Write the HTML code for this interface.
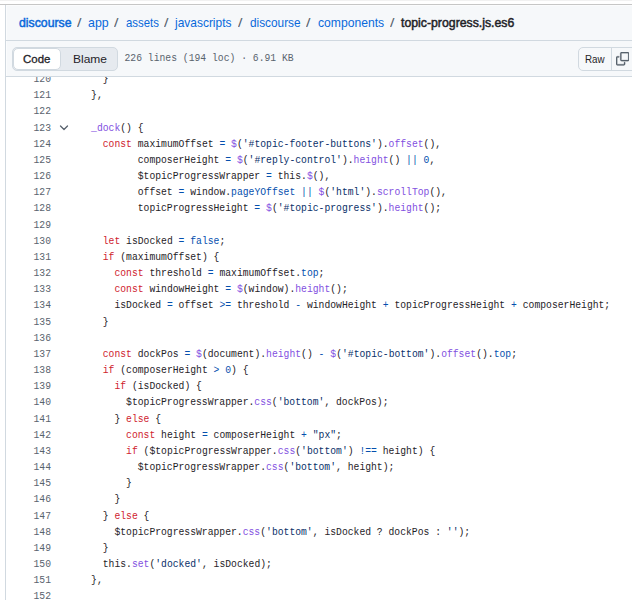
<!DOCTYPE html>
<html><head><meta charset="utf-8">
<style>
*{box-sizing:border-box;margin:0;padding:0}
html,body{width:632px;height:600px;overflow:hidden;background:#fff;font-family:"Liberation Sans",sans-serif}
.abs{position:absolute}
#topline{position:absolute;left:0;top:0;width:632px;height:1px;background:#f1f1f1}
#hline{position:absolute;left:0;top:4px;width:632px;height:1px;background:#c6c6c6}
#vline{position:absolute;left:5px;top:5px;width:1px;height:595px;background:#d1d9e0}
#hdr{position:absolute;left:6px;top:5px;width:626px;height:36px;background:#f6f8fa;border-bottom:1px solid #d1d9e0}
.cr{position:absolute;top:10.15px;font-size:12.8px;line-height:16px;white-space:nowrap;transform-origin:0 0}
#tb{position:absolute;left:6px;top:41px;width:626px;height:36px;background:#f6f8fa;border-bottom:1px solid #d1d9e0}
#seg{position:absolute;left:6px;top:6px;width:106px;height:23.5px;border-radius:5px;background:#e6eaef;border:1px solid #d1d9e0}
#seg .code{position:absolute;left:-0.5px;top:-0.5px;width:48px;height:22.5px;background:#fff;border:1px solid #d1d9e0;border-radius:5px}
.bt{position:absolute;font-size:11.4px;line-height:14px;white-space:nowrap;color:#1f2328;transform-origin:0 0}
#meta{position:absolute;left:118.5px;top:9.9px;font-family:"Liberation Mono",monospace;font-size:9.72px;line-height:16px;color:#59636e;white-space:pre;transform:scaleY(1.17)}
#raw{position:absolute;left:572px;top:6px;width:70px;height:23.5px;border:1px solid #d1d9e0;border-radius:5px;background:#f6f8fa}
#raw .d{position:absolute;left:32px;top:0;width:1px;height:21.5px;background:#d1d9e0}
#raw svg{position:absolute;left:36.6px;top:4.3px}
#code{position:absolute;left:6px;top:77px;width:626px;height:523px;overflow:hidden;background:#fff}
#lines{position:absolute;left:0;top:0;width:626px;height:600px}
.r{position:absolute;left:0;height:16.167px;width:626px;font-family:"Liberation Mono",monospace;font-size:9.72px;line-height:16.167px;white-space:pre;transform:scaleY(1.17);transform-origin:50% 50%}
.ln{position:absolute;right:581.0px;top:0;color:#59636e;transform-origin:100% 50%}
.cl{position:absolute;left:73.4px;top:0;color:#1f2328}
.k{color:#cf222e}.f{color:#8250df}.c{color:#0550ae}.s{color:#0a3069}
#chev{position:absolute;left:52.5px;top:46.5px}
</style></head><body>
<div id="topline"></div>
<div id="hline"></div>
<div style="position:absolute;left:6px;top:5px;width:626px;height:1px;background:#fbfcfd;z-index:2"></div>
<div id="hdr"><span class="cr" style="left:-6px;margin-left:18.95px;font-weight:normal;-webkit-text-stroke:0.5px currentColor;color:#0969da;transform:scaleX(0.9590)">discourse</span><span class="cr" style="left:-6px;margin-left:77.10px;font-weight:normal;color:#59636e;transform:scaleX(1.2500)">/</span><span class="cr" style="left:-6px;margin-left:88.30px;font-weight:normal;color:#0969da;transform:scaleX(0.9680)">app</span><span class="cr" style="left:-6px;margin-left:114.30px;font-weight:normal;color:#59636e;transform:scaleX(1.2500)">/</span><span class="cr" style="left:-6px;margin-left:126.30px;font-weight:normal;color:#0969da;transform:scaleX(0.8890)">assets</span><span class="cr" style="left:-6px;margin-left:164.10px;font-weight:normal;color:#59636e;transform:scaleX(1.2500)">/</span><span class="cr" style="left:-6px;margin-left:175.40px;font-weight:normal;color:#0969da;transform:scaleX(0.9340)">javascripts</span><span class="cr" style="left:-6px;margin-left:238.10px;font-weight:normal;color:#59636e;transform:scaleX(1.2500)">/</span><span class="cr" style="left:-6px;margin-left:249.80px;font-weight:normal;color:#0969da;transform:scaleX(0.9230)">discourse</span><span class="cr" style="left:-6px;margin-left:306.30px;font-weight:normal;color:#59636e;transform:scaleX(1.2500)">/</span><span class="cr" style="left:-6px;margin-left:318.20px;font-weight:normal;color:#0969da;transform:scaleX(0.9480)">components</span><span class="cr" style="left:-6px;margin-left:390.20px;font-weight:normal;color:#59636e;transform:scaleX(1.2500)">/</span><span class="cr" style="left:-6px;margin-left:401.25px;font-weight:normal;-webkit-text-stroke:0.5px currentColor;color:#1f2328;transform:scaleX(0.9600)">topic-progress.js.es6</span></div>
<div id="tb">
 <div id="seg"><div class="code"></div></div>
 <span class="bt" style="left:16.95px;top:11.0px;font-weight:normal;-webkit-text-stroke:0.3px currentColor;transform:scaleX(1.006)">Code</span>
 <span class="bt" style="left:66.9px;top:11.0px;transform:scaleX(1.054)">Blame</span>
 <div id="meta">226 lines (194 loc) · 6.91 KB</div>
 <div id="raw"><div class="d"></div>
  <svg width="13.4" height="13.4" viewBox="0 0 16 16" fill="#59636e" stroke="#59636e" stroke-width="0.25"><path d="M0 6.75C0 5.784.784 5 1.75 5h1.5a.75.75 0 0 1 0 1.5h-1.5a.25.25 0 0 0-.25.25v7.5c0 .138.112.25.25.25h7.5a.25.25 0 0 0 .25-.25v-1.5a.75.75 0 0 1 1.5 0v1.5A1.75 1.75 0 0 1 9.25 16h-7.5A1.75 1.75 0 0 1 0 14.25Z"/><path d="M5 1.75C5 .784 5.784 0 6.75 0h7.5C15.216 0 16 .784 16 1.75v7.5A1.75 1.75 0 0 1 14.25 11h-7.5A1.75 1.75 0 0 1 5 9.25Zm1.75-.25a.25.25 0 0 0-.25.25v7.5c0 .138.112.25.25.25h7.5a.25.25 0 0 0 .25-.25v-7.5a.25.25 0 0 0-.25-.25Z"/></svg>
 </div>
 <span class="bt" style="left:578.7px;top:11.0px;transform:scaleX(0.86)">Raw</span>
</div>
<div id="vline"></div>
<div style="position:absolute;left:6px;top:5px;width:1px;height:35px;background:#fbfcfd;z-index:2"></div><div style="position:absolute;left:6px;top:41px;width:1px;height:35px;background:#fbfcfd;z-index:2"></div>
<div id="code"><div id="lines">
<div class="r" style="top:-4.950px"><span class="ln">120</span><span class="cl">    }</span></div>
<div class="r" style="top:11.217px"><span class="ln">121</span><span class="cl">  },</span></div>
<div class="r" style="top:27.384px"><span class="ln">122</span><span class="cl"></span></div>
<div class="r" style="top:43.551px"><span class="ln">123</span><span class="cl">  <span class="f">_dock</span>() {</span></div>
<div class="r" style="top:59.718px"><span class="ln">124</span><span class="cl">    <span class="k">const</span> maximumOffset <span class="c">=</span> <span class="f">$</span>(<span class="s">&#x27;#topic-footer-buttons&#x27;</span>).<span class="f">offset</span>(),</span></div>
<div class="r" style="top:75.885px"><span class="ln">125</span><span class="cl">          composerHeight <span class="c">=</span> <span class="f">$</span>(<span class="s">&#x27;#reply-control&#x27;</span>).<span class="f">height</span>() <span class="c">||</span> <span class="c">0</span>,</span></div>
<div class="r" style="top:92.052px"><span class="ln">126</span><span class="cl">          $topicProgressWrapper <span class="c">=</span> this.<span class="f">$</span>(),</span></div>
<div class="r" style="top:108.219px"><span class="ln">127</span><span class="cl">          offset <span class="c">=</span> window.<span class="c">pageYOffset</span> <span class="c">||</span> <span class="f">$</span>(<span class="s">&#x27;html&#x27;</span>).<span class="f">scrollTop</span>(),</span></div>
<div class="r" style="top:124.386px"><span class="ln">128</span><span class="cl">          topicProgressHeight <span class="c">=</span> <span class="f">$</span>(<span class="s">&#x27;#topic-progress&#x27;</span>).<span class="f">height</span>();</span></div>
<div class="r" style="top:140.553px"><span class="ln">129</span><span class="cl"></span></div>
<div class="r" style="top:156.720px"><span class="ln">130</span><span class="cl">    <span class="k">let</span> isDocked <span class="c">=</span> <span class="c">false</span>;</span></div>
<div class="r" style="top:172.887px"><span class="ln">131</span><span class="cl">    <span class="k">if</span> (maximumOffset) {</span></div>
<div class="r" style="top:189.054px"><span class="ln">132</span><span class="cl">      <span class="k">const</span> threshold <span class="c">=</span> maximumOffset.<span class="c">top</span>;</span></div>
<div class="r" style="top:205.221px"><span class="ln">133</span><span class="cl">      <span class="k">const</span> windowHeight <span class="c">=</span> <span class="f">$</span>(window).<span class="f">height</span>();</span></div>
<div class="r" style="top:221.388px"><span class="ln">134</span><span class="cl">      isDocked <span class="c">=</span> offset <span class="c">&gt;=</span> threshold <span class="c">-</span> windowHeight <span class="c">+</span> topicProgressHeight <span class="c">+</span> composerHeight;</span></div>
<div class="r" style="top:237.555px"><span class="ln">135</span><span class="cl">    }</span></div>
<div class="r" style="top:253.722px"><span class="ln">136</span><span class="cl"></span></div>
<div class="r" style="top:269.889px"><span class="ln">137</span><span class="cl">    <span class="k">const</span> dockPos <span class="c">=</span> <span class="f">$</span>(document).<span class="f">height</span>() <span class="c">-</span> <span class="f">$</span>(<span class="s">&#x27;#topic-bottom&#x27;</span>).<span class="f">offset</span>().<span class="c">top</span>;</span></div>
<div class="r" style="top:286.056px"><span class="ln">138</span><span class="cl">    <span class="k">if</span> (composerHeight <span class="c">&gt;</span> <span class="c">0</span>) {</span></div>
<div class="r" style="top:302.223px"><span class="ln">139</span><span class="cl">      <span class="k">if</span> (isDocked) {</span></div>
<div class="r" style="top:318.390px"><span class="ln">140</span><span class="cl">        $topicProgressWrapper.<span class="f">css</span>(<span class="s">&#x27;bottom&#x27;</span>, dockPos);</span></div>
<div class="r" style="top:334.557px"><span class="ln">141</span><span class="cl">      } <span class="k">else</span> {</span></div>
<div class="r" style="top:350.724px"><span class="ln">142</span><span class="cl">        <span class="k">const</span> height <span class="c">=</span> composerHeight <span class="c">+</span> <span class="s">&quot;px&quot;</span>;</span></div>
<div class="r" style="top:366.891px"><span class="ln">143</span><span class="cl">        <span class="k">if</span> ($topicProgressWrapper.<span class="f">css</span>(<span class="s">&#x27;bottom&#x27;</span>) <span class="c">!==</span> height) {</span></div>
<div class="r" style="top:383.058px"><span class="ln">144</span><span class="cl">          $topicProgressWrapper.<span class="f">css</span>(<span class="s">&#x27;bottom&#x27;</span>, height);</span></div>
<div class="r" style="top:399.225px"><span class="ln">145</span><span class="cl">        }</span></div>
<div class="r" style="top:415.392px"><span class="ln">146</span><span class="cl">      }</span></div>
<div class="r" style="top:431.559px"><span class="ln">147</span><span class="cl">    } <span class="k">else</span> {</span></div>
<div class="r" style="top:447.726px"><span class="ln">148</span><span class="cl">      $topicProgressWrapper.<span class="f">css</span>(<span class="s">&#x27;bottom&#x27;</span>, isDocked ? dockPos : <span class="s">&#x27;&#x27;</span>);</span></div>
<div class="r" style="top:463.893px"><span class="ln">149</span><span class="cl">    }</span></div>
<div class="r" style="top:480.060px"><span class="ln">150</span><span class="cl">    this.<span class="f">set</span>(<span class="s">&#x27;docked&#x27;</span>, isDocked);</span></div>
<div class="r" style="top:496.227px"><span class="ln">151</span><span class="cl">  },</span></div>
<div class="r" style="top:512.394px"><span class="ln">152</span><span class="cl"></span></div>
<svg id="chev" width="10" height="8" viewBox="0 0 10 8"><path d="M1.5 2 L5 5.5 L8.5 2" fill="none" stroke="#59636e" stroke-width="1.3" stroke-linecap="round" stroke-linejoin="round"/></svg>
</div></div>
</body></html>
